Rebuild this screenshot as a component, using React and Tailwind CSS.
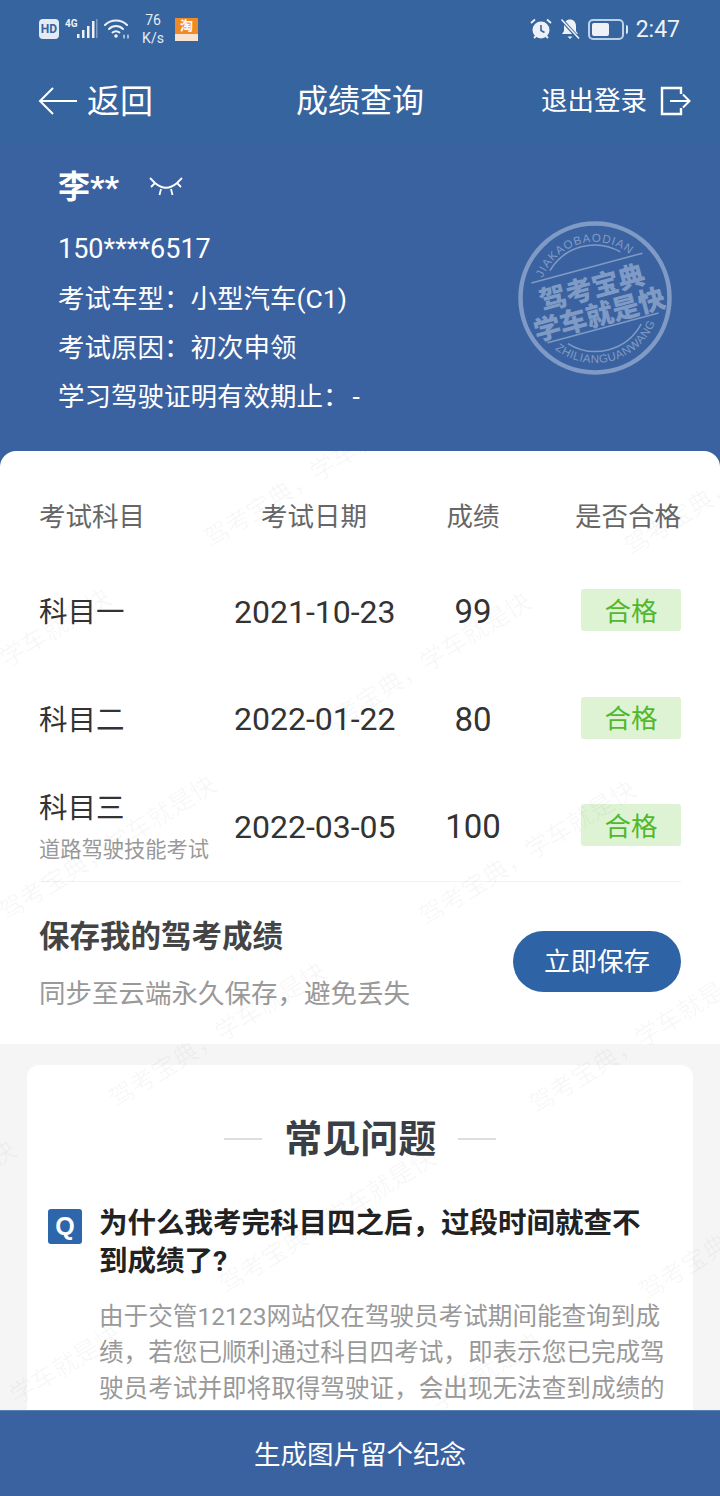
import React from 'react';

const FONT = 'font-["Roboto","Noto_Sans_CJK_SC",sans-serif]';

const scores = [
  { name: '科目一', date: '2021-10-23', score: '99' },
  { name: '科目二', date: '2022-01-22', score: '80' },
  { name: '科目三', sub: '道路驾驶技能考试', date: '2022-03-05', score: '100' },
];

// 水印起点 (left, bottom baseline)
const marks = [
  [213, 552], [633, 560],
  [-97, 738], [323, 742],
  [8, 925], [428, 930],
  [-302, 1105], [118, 1112], [538, 1118],
  [-192, 1290], [228, 1298], [648, 1305],
  [-87, 1475], [333, 1482],
];

function StatusBar() {
  return (
    <div className="flex h-[58px] items-center justify-between pl-[39px] pr-[40px] text-white">
      <div className="flex items-center">
        <div className="flex h-[20px] w-[20px] items-center justify-center rounded-[4px] bg-[#e4ebf5] text-[12px] font-bold leading-none text-[#36649f]">HD</div>
        <svg width="40" height="22" viewBox="0 0 40 22" className="ml-[6px]" fill="#eef2f8">
          <text x="0" y="9" fontSize="10" fontWeight="700" fontFamily="Roboto">4G</text>
          <rect x="12" y="16" width="2.5" height="4" />
          <rect x="17" y="12" width="2.5" height="8" />
          <rect x="22" y="8" width="2.5" height="12" />
          <rect x="27" y="3" width="2.5" height="17" />
          <rect x="31" y="1" width="1.5" height="19" opacity="0.4" />
        </svg>
        <svg width="26" height="22" viewBox="0 0 26 22" className="ml-[-1px]" fill="none" stroke="#eef2f8" strokeWidth="2" strokeLinecap="round">
          <path d="M1 7 C7 1 17 1 23 7" />
          <path d="M5 11 C9 7 15 7 19 11" />
          <path d="M8.500 14.500 C10.500 13 13.500 13 15.500 14.500" />
          <circle cx="12" cy="18" r="1.800" fill="#eef2f8" stroke="none" />
          <path d="M20 17v3M24 17v3" strokeWidth="1.200" />
        </svg>
        <div className="ml-[11px] w-[24px] text-center text-[14px] leading-[18px] text-[#e6ecf5]">
          <div>76</div>
          <div>K/s</div>
        </div>
        <div className="ml-[10px] flex h-[23px] w-[23px] flex-col overflow-hidden bg-[#f08a24]">
          <div className="flex h-[16px] items-center justify-center text-[13px] font-bold leading-none text-white">淘</div>
          <div className="flex-1 bg-[#f7e3d4]" />
        </div>
      </div>
      <div className="flex items-center">
        <svg width="22" height="22" viewBox="0 0 22 22">
          <circle cx="11" cy="12" r="8.500" fill="#eef2f8" />
          <path d="M11 7v5.500l3.500 2" fill="none" stroke="#36649f" strokeWidth="1.600" />
          <path d="M1 5l4-3.500M21 5l-4-3.500M4 20l2-2M18 20l-2-2" stroke="#eef2f8" strokeWidth="1.800" />
        </svg>
        <svg width="22" height="22" viewBox="0 0 22 22" className="ml-[7px]">
          <path d="M11 1.500c-3.500 0-6 2.700-6 6.500v5l-2 3h16l-2-3V8c0-3.800-2.500-6.500-6-6.500z" fill="#eef2f8" />
          <path d="M8.500 18.500h5l-2.500 2.500z" fill="#eef2f8" />
          <path d="M2 1l18 20" stroke="#36649f" strokeWidth="3.500" />
          <path d="M2.500 1.500l17.500 19" stroke="#eef2f8" strokeWidth="1.600" />
        </svg>
        <div className="ml-[7px] flex h-[21px] w-[36px] items-center rounded-[5px] border-2 border-[#bcd0e8] p-[2px]">
          <div className="h-full w-[17px] rounded-[2px] bg-[#eef2f8]" />
        </div>
        <div className="ml-[2px] h-[9px] w-[2px] rounded-r bg-[#dfe7f2]" />
        <div className="ml-[8px] text-[23px] leading-none text-[#eef2f8]">2:47</div>
      </div>
    </div>
  );
}

function NavBar() {
  return (
    <div className="relative flex h-[86px] items-center justify-between pl-[38px] pr-[29px] text-white">
      <div className="flex items-center">
        <svg width="40" height="30" viewBox="0 0 40 30" fill="none" stroke="white" strokeWidth="2">
          <path d="M39 15H2M15 2L2 15l13 13" />
        </svg>
        <span className="ml-[9px] text-[33px] leading-none">返回</span>
      </div>
      <div className="absolute left-0 right-0 text-center text-[32px] leading-none">成绩查询</div>
      <div className="flex items-center">
        <span className="text-[26.5px] leading-none">退出登录</span>
        <svg width="31" height="30" viewBox="0 0 31 30" className="ml-[13px]" fill="none" stroke="white" strokeWidth="2.400">
          <path d="M21 8V2H2v26h19v-6" />
          <path d="M10 15h19M23 8.500l6.500 6.500-6.500 6.500" strokeWidth="2" />
        </svg>
      </div>
    </div>
  );
}

function Stamp() {
  return (
    <svg width="156" height="156" viewBox="0 0 156 156" className="absolute left-[517px] top-[76px]">
      <circle cx="78" cy="78" r="74.500" fill="none" stroke="#7f9bc5" strokeWidth="4.500" />
      <defs>
        <path id="stampTop" d="M22 78 A56 56 0 0 1 134 78" />
        <path id="stampBot" d="M13 78 A65 65 0 0 0 143 78" />
      </defs>
      <g transform="rotate(-15 78 78)" fill="#7f9bc5">
        <text fontSize="11.500" fontFamily="Liberation Sans" letterSpacing="1">
          <textPath href="#stampTop" startOffset="50%" textAnchor="middle">JIAKAOBAODIAN</textPath>
        </text>
        <text fontSize="11.500" fontFamily="Liberation Sans" letterSpacing="0.500">
          <textPath href="#stampBot" startOffset="50%" textAnchor="middle">ZHILIANGUANWANG</textPath>
        </text>
        <text x="78" y="77" textAnchor="middle" fontSize="27" fontWeight="900" fontFamily="Noto Sans CJK SC">驾考宝典</text>
        <text x="78" y="105" textAnchor="middle" fontSize="27" fontWeight="900" fontFamily="Noto Sans CJK SC">学车就是快</text>
        <path d="M20.500 47H135.500M20.500 109H135.500" stroke="#7f9bc5" strokeWidth="1.500" />
        <path d="M41.500 40A52 52 0 0 1 114.500 40M40 115A52 52 0 0 0 116 115" fill="none" stroke="#7f9bc5" strokeWidth="1.500" />
      </g>
    </svg>
  );
}

function UserInfo() {
  return (
    <div className="relative h-[307px] bg-[#3b62a0] pl-[58px] pt-[22px] text-white">
      <div className="flex h-[42px] items-center">
        <span className="text-[32px] font-bold leading-none">李**</span>
        <svg width="36" height="22" viewBox="0 0 36 22" className="ml-[29px]" fill="none" stroke="white" strokeWidth="1.800">
          <path d="M2 2l5 5c7 6 15 6 22 0l5-5M3 11l4-4M33 11l-4-4M13 13l-1.500 6M23 13l1.500 6" />
        </svg>
      </div>
      <div className="mt-[17px] text-[26.5px] leading-[49px]">
        <div className="text-[27px]">150****6517</div>
        <div>考试车型：小型汽车(C1)</div>
        <div>考试原因：初次申领</div>
        <div>学习驾驶证明有效期止：<span className="ml-[3px]">-</span></div>
      </div>
      <Stamp />
    </div>
  );
}

function ScoreTable() {
  return (
    <div className="bg-[#3b62a0]">
      <div className="rounded-t-[16px] bg-white px-[39px]">
        <div className="grid h-[107px] grid-cols-[195px_160px_158px_1fr] items-center pt-[26px] text-[26.5px] leading-none text-[#666666]">
          <div>考试科目</div>
          <div className="text-center">考试日期</div>
          <div className="text-center">成绩</div>
          <div className="whitespace-nowrap text-right">是否合格</div>
        </div>
        {scores.map((row) => (
          <div key={row.name} className="grid h-[107.5px] grid-cols-[195px_160px_158px_1fr] items-center text-[#333333]">
            <div className={row.sub ? 'pt-[2px] text-[28.5px] leading-none' : 'pt-[3px] text-[28.5px] leading-none'}>
              <div>{row.name}</div>
              {row.sub && <div className="mt-[16px] whitespace-nowrap text-[21.25px] leading-none text-[#999999]">{row.sub}</div>}
            </div>
            <div className="whitespace-nowrap text-center text-[32px] leading-none">{row.date}</div>
            <div className="text-center text-[33px] leading-none">{row.score}</div>
            <div className="flex justify-end">
              <div className="mb-[3px] flex h-[42px] w-[100px] items-center justify-center rounded-[3px] bg-[#def3d3] pt-[3px] text-[26.5px] leading-none text-[#52b82b]">合格</div>
            </div>
          </div>
        ))}
      </div>
    </div>
  );
}

function SaveRow() {
  return (
    <div className="bg-white px-[39px]">
      <div className="flex h-[163px] items-start justify-between border-t border-[#f3f3f3]">
        <div>
          <div className="mt-[40px] text-[30.5px] font-bold leading-none text-[#444444]">保存我的驾考成绩</div>
          <div className="mt-[29px] text-[26.5px] leading-none text-[#999999]">同步至云端永久保存，避免丢失</div>
        </div>
        <div className="mt-[49px] flex h-[61px] w-[168px] items-center justify-center rounded-full bg-[#2e64a6] pt-[3px] text-[26.5px] leading-none text-white">立即保存</div>
      </div>
    </div>
  );
}

function Faq() {
  return (
    <div className="mx-[27px] mt-[21px] h-[500px] rounded-t-[12px] bg-white pl-[21px] pr-[27.5px]">
      <div className="ml-[7px] flex items-center justify-center pt-[55px]">
        <div className="h-[2px] w-[38px] bg-[#dddddd]" />
        <div className="mx-[22px] text-[38px] font-bold leading-none text-[#3a3f47]">常见问题</div>
        <div className="h-[2px] w-[38px] bg-[#dddddd]" />
      </div>
      <div className="mt-[47px] flex items-start">
        <div className="mt-[4px] flex h-[35px] w-[34px] shrink-0 items-center justify-center rounded-[3px] bg-[#2d66aa] font-['Liberation_Sans',sans-serif] text-[25px] font-bold leading-none text-white">Q</div>
        <div className="ml-[17px] min-w-0">
          <div className="text-[28.5px] font-bold leading-[38px] text-[#222222]">为什么我考完科目四之后，过段时间就查不到成绩了?</div>
          <div className="mt-[18px] text-[24.6px] leading-[36px] text-[#999999]">由于交管12123网站仅在驾驶员考试期间能查询到成绩，若您已顺利通过科目四考试，即表示您已完成驾驶员考试并即将取得驾驶证，会出现无法查到成绩的情况。</div>
        </div>
      </div>
    </div>
  );
}

export default function App() {
  return (
    <div className={`relative h-[1496px] w-[720px] overflow-hidden bg-[#f5f5f5] ${FONT}`}>
      <div className="bg-[#36649f]">
        <StatusBar />
        <NavBar />
      </div>
      <UserInfo />
      <ScoreTable />
      <SaveRow />
      <Faq />

      {/* watermark */}
      <div className="pointer-events-none absolute inset-x-0 bottom-[86px] top-[451px] overflow-hidden">
        {marks.map(([x, y]) => (
          <div
            key={`${x}-${y}`}
            className="absolute origin-bottom-left -rotate-[32deg] whitespace-nowrap text-[25px] leading-none text-black/[0.04]"
            style={{ left: x, top: y - 451 - 25 }}
          >
            驾考宝典，学车就是快
          </div>
        ))}
      </div>

      <div className="absolute inset-x-0 bottom-0 flex h-[86px] items-center justify-center border-t border-[#5b7fb3] bg-[#3b62a0] pt-[4px] text-[26.5px] leading-none text-white">
        生成图片留个纪念
      </div>
    </div>
  );
}
